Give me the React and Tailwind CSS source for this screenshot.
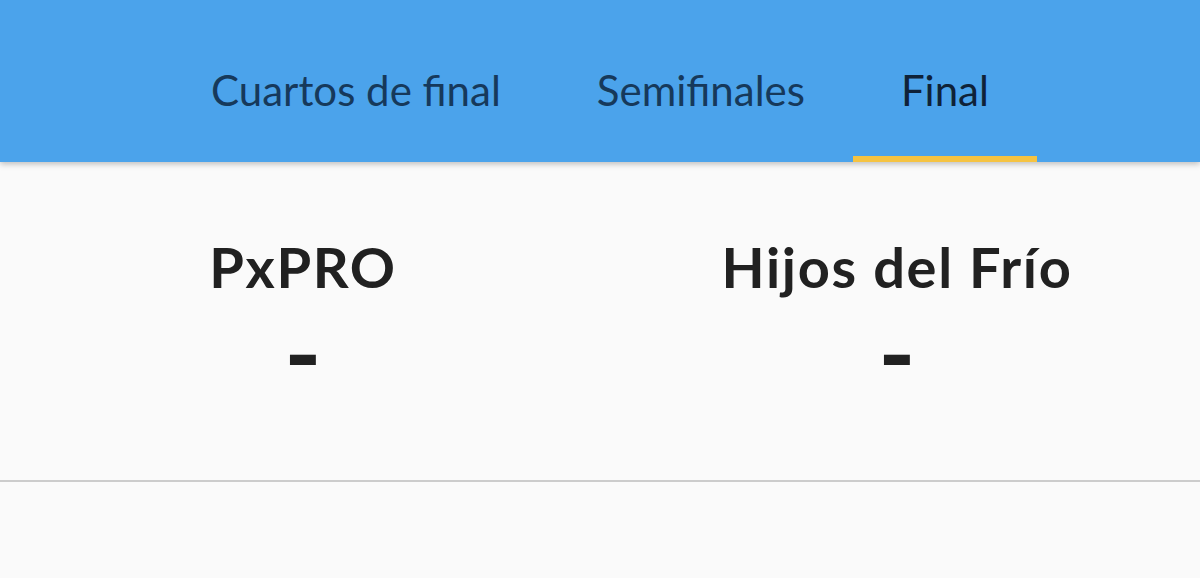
import React from 'react';

const tabs = ['Cuartos de final', 'Semifinales', 'Final'];

function Team({ name }) {
    return (
        <div className="flex-1 flex flex-col items-center">
            <h2 className="text-[56px] leading-none font-bold tracking-[0.03em] text-[#212121] mt-[77px]">{name}</h2>
            <span className="block h-[40px] text-[100px] leading-[40px] font-bold text-[#212121] mt-[36px]">-</span>
        </div>
    );
}

export default function App() {
    const active = 2;
    return (
        <div className="w-[1200px] h-[578px] bg-[#fafafa] overflow-hidden" style={{ fontFamily: 'Lato, "Open Sans", sans-serif' }}>
            <header className="relative z-10 h-[162px] bg-[#4ba3eb] flex justify-center shadow-[0_2px_6px_rgba(0,0,0,0.25)]">
                {tabs.map((t, i) => (
                    <div
                        key={t}
                        className={
                            i === active
                                ? 'h-full px-[48px] flex items-center border-b-[6px] border-[#f5c342] pt-[24px] text-[42px] text-[#0f2238]'
                                : 'h-full px-[48px] flex items-center border-b-[6px] border-transparent pt-[24px] text-[42px] text-[#16395b]'
                        }
                    >
                        {t}
                    </div>
                ))}
            </header>
            <div className="flex h-[320px] px-[6px] border-b-2 border-[#cccccc]">
                <Team name="PxPRO" />
                <Team name="Hijos del Frío" />
            </div>
        </div>
    );
}
